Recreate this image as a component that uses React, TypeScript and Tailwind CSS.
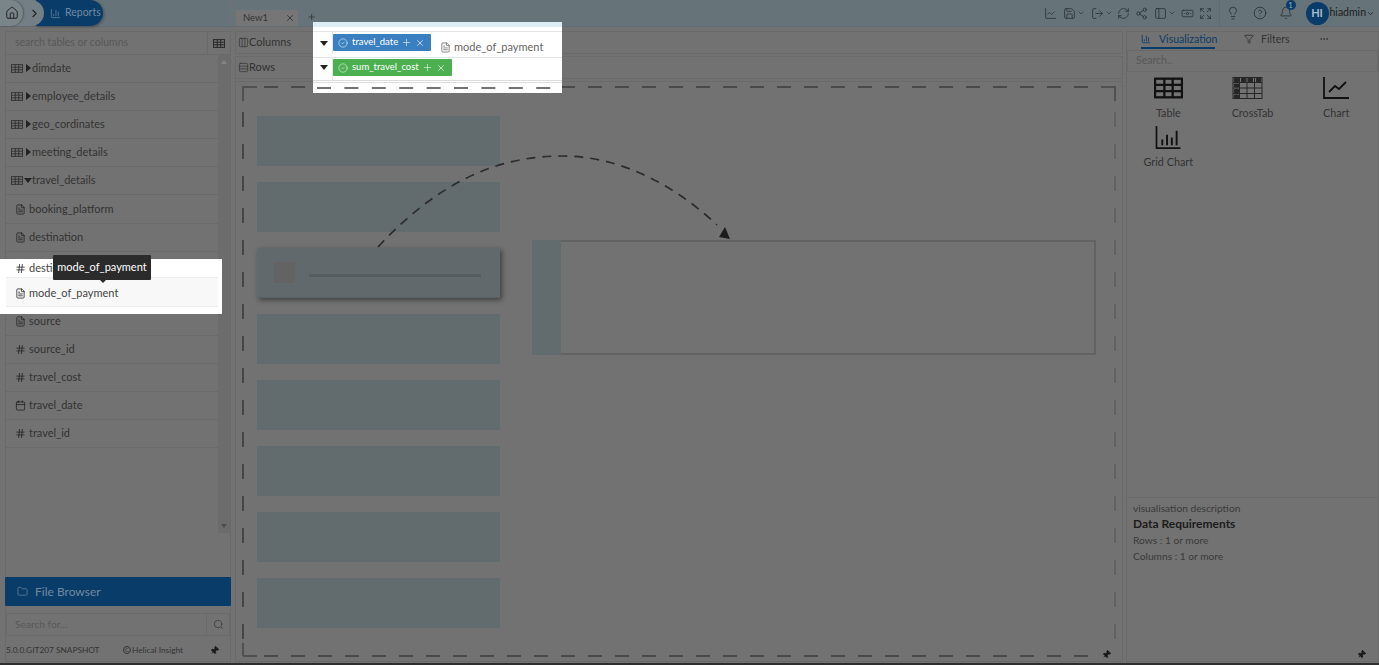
import React from 'react';
import {
  Bell,
  Calendar,
  ChartColumn,
  ChartLine,
  ChevronDown,
  ChevronRight,
  CircleCheck,
  CircleHelp,
  Columns3,
  Ellipsis,
  Expand,
  FileText,
  Filter,
  Folder,
  Hash,
  House,
  Lightbulb,
  Pin,
  RefreshCw,
  Rows3,
  Save,
  Search,
  Share2,
  Banknote,
  PanelLeft,
  LogOut,
  X,
  Plus,
} from 'lucide-react';

const tables = ['dimdate', 'employee_details', 'geo_cordinates', 'meeting_details'];

// the two rows under the white highlight are drawn in the highlight itself
const fields = [
  { name: 'booking_platform', icon: FileText },
  { name: 'destination', icon: FileText },
  { name: '', icon: Hash },
  { name: '', icon: FileText },
  { name: 'source', icon: FileText },
  { name: 'source_id', icon: Hash },
  { name: 'travel_cost', icon: Hash },
  { name: 'travel_date', icon: Calendar },
  { name: 'travel_id', icon: Hash },
];

const TableGlyph = ({ className }: { className: string }) => (
  <svg viewBox="0 0 28 20" className={className} fill="none" stroke="currentColor" strokeWidth="2.2">
    <rect x="1" y="1" width="26" height="18" />
    <path d="M1 7h26M1 13h26M10 1v18M18 1v18" />
  </svg>
);

const Caret = ({ open }: { open?: boolean }) => (
  <span className={`w-0 h-0 border-solid ${open ? 'border-x-[4px] border-t-[5px] border-x-transparent border-t-[#222]' : 'border-y-[4px] border-l-[5px] border-y-transparent border-l-[#222]'}`} />
);

const TreeRow = ({ name, open }: { name: string; open?: boolean }) => (
  <div className="h-[28px] flex items-center pl-[5px] pb-[1px] border-b border-[#6a6a6a] text-[#333]">
    <TableGlyph className="w-[12px] h-[9px] text-[#333]" />
    <span className="ml-[1px] w-[8px] flex justify-center"><Caret open={open} /></span>
    <span>{name}</span>
  </div>
);

const ToolIcon = ({ icon: Icon, chevron, className }: { icon: React.ElementType; chevron?: boolean; className: string }) => (
  <span className={`flex items-center ${className}`}>
    <Icon size={13} strokeWidth={1.5} className="text-[#2a3338]" />
    {chevron && <ChevronDown size={8} className="ml-[1px] text-[#2a3338]" />}
  </span>
);

const placeholders = [0, 1, 2, 3, 4, 5, 6, 7];

export default function App() {
  return (
    <div className="relative w-full h-[665px] overflow-hidden bg-[#727272] flex flex-col text-[11px] text-[#333] font-['Lato','Noto_Sans',sans-serif]">
      {/* top bar */}
      <header className="h-[27px] shrink-0 flex bg-[#667379] border-b border-[#606c72]">
        <div className="relative w-[231px] shrink-0 border-r border-[#727272]">
          <div className="absolute left-[36px] top-0 h-[26px] w-[67px] rounded-r-[14px] bg-[#0a3c6a] flex items-center pl-[14px] text-[#6f8aa0] shadow-[1px_1px_3px_rgba(0,0,0,.3)]">
            <ChartColumn size={11} strokeWidth={1.5} />
            <span className="ml-[4px] text-[10.5px]">Reports</span>
          </div>
          <div className="absolute left-0 top-0 h-[26px] w-[44px] rounded-r-[14px] bg-[#737f85] flex items-center justify-end pr-[3px]">
            <ChevronRight size={13} className="text-[#222]" />
          </div>
          <div className="absolute left-0 top-0 h-[26px] w-[23px] rounded-r-[14px] bg-[#7a858a] flex items-center justify-center shadow-[1px_0_2px_rgba(0,0,0,.3)]">
            <House size={14} strokeWidth={1.6} className="text-[#1c1c1c]" />
          </div>
        </div>
        <div className="ml-[5px] w-[80px] flex items-end">
          <div className="w-[66px] h-[16px] bg-[#767676] flex items-center pl-[7px] pr-[3px] justify-between text-[9.5px]">
            New1
            <X size={10} className="text-[#333]" />
          </div>
          <Plus size={10} strokeWidth={2} className="ml-[9px] mb-[4px] text-[#333]" />
        </div>
        <div className="ml-auto h-full flex items-center">
          <ToolIcon icon={ChartLine} className="w-[19px]" />
          <ToolIcon icon={Save} chevron className="w-[28px]" />
          <ToolIcon icon={LogOut} chevron className="w-[26px]" />
          <ToolIcon icon={RefreshCw} className="w-[18px]" />
          <ToolIcon icon={Share2} className="w-[19px]" />
          <ToolIcon icon={PanelLeft} chevron className="w-[27px]" />
          <ToolIcon icon={Banknote} className="w-[18px]" />
          <ToolIcon icon={Expand} className="w-[20px]" />
          <div className="w-px h-full bg-[#606c72] mr-[6px]" />
          <span className="w-[27px]"><Lightbulb size={14} strokeWidth={1.5} className="text-[#2a3338]" /></span>
          <span className="w-[26px]"><CircleHelp size={14} strokeWidth={1.5} className="text-[#2a3338]" /></span>
          <span className="relative w-[27px]">
            <Bell size={14} strokeWidth={1.5} className="text-[#2a3338]" />
            <span className="absolute -top-[6px] left-[7px] w-[10px] h-[10px] rounded-full bg-[#0a3c6a] text-[#9db8cc] text-[7px] leading-[10px] text-center">1</span>
          </span>
          <span className="w-[23px] h-[23px] rounded-full bg-[#0a3c6a] text-[#a8bccb] text-[11px] font-bold flex items-center justify-center">HI</span>
          <span className="ml-[1px] text-[10.5px] text-[#1c1c1c]">hiadmin</span>
          <ChevronDown size={9} className="mr-[4px] text-[#1c1c1c]" />
        </div>
      </header>

      <div className="flex-1 min-h-0 flex pl-[5px] pt-[4px] pb-[3px]">
        {/* left panel */}
        <aside className="w-[226px] shrink-0 flex flex-col border border-[#6a6a6a]">
          <div className="h-[23px] shrink-0 flex border-b border-[#6a6a6a]">
            <div className="flex-1 flex items-center pl-[9px] text-[#585858] text-[10.5px] border-r border-[#6a6a6a]">search tables or columns</div>
            <div className="w-[22px] flex items-center justify-center">
              <TableGlyph className="w-[12px] h-[9px] text-[#222]" />
            </div>
          </div>
          <div className="h-[516px] flex">
            <div className="flex-1 min-w-0">
              {tables.map((t) => <TreeRow key={t} name={t} />)}
              <TreeRow name="travel_details" open />
              <div className="pt-px">
                {fields.map((f, i) => (
                  <div key={i} className="h-[28px] flex items-center pl-[9px] border-b border-[#6a6a6a] text-[#333]">
                    <f.icon size={11} strokeWidth={1.7} className="text-[#222]" />
                    <span className="ml-[3px]">{f.name}</span>
                  </div>
                ))}
              </div>
            </div>
            <div className="w-[12px] h-[478px] bg-[#6c6c6c] flex flex-col items-center justify-between py-[5px]">
              <span className="border-x-[3px] border-b-[4px] border-x-transparent border-b-[#858585]" />
              <span className="border-x-[3px] border-t-[4px] border-x-transparent border-t-[#4c4c4c]" />
            </div>
          </div>
          <div className="mt-[6px] -mx-px h-[29px] shrink-0 bg-[#0a3c6a] rounded-[1px] flex items-center pl-[12px] text-[#6f8aa0] text-[12px]">
            <Folder size={11} strokeWidth={1.5} />
            <span className="ml-[7px]">File Browser</span>
          </div>
          <div className="mt-[7px] h-[23px] shrink-0 flex border border-[#6a6a6a]">
            <div className="flex-1 flex items-center pl-[8px] text-[#585858] text-[10.2px] border-r border-[#6a6a6a]">Search for...</div>
            <div className="w-[22px] flex items-center justify-center"><Search size={11} className="text-[#444]" /></div>
          </div>
          <div className="flex-1 flex items-center pt-[3px] text-[8.3px] text-[#333]">
            <span className="w-[117px] whitespace-nowrap">5.0.0.GIT207 SNAPSHOT</span>
            <span className="w-[8px] h-[8px] rounded-full border border-[#333] text-[6px] leading-[6px] text-center">C</span>
            <span className="ml-[1px] w-[78px] whitespace-nowrap">Helical Insight</span>
            <Pin size={9} fill="#1a1a1a" className="text-[#1a1a1a] rotate-45" />
          </div>
        </aside>

        {/* center */}
        <main className="w-[888px] shrink-0 ml-[4px] flex flex-col">
          <div className="h-[23px] shrink-0 flex items-center pl-[2px] pb-[1px] border border-[#6a6a6a] text-[#333]">
            <Columns3 size={11} strokeWidth={1.5} />
            <span>Columns</span>
          </div>
          <div className="mt-[2px] h-[23px] shrink-0 flex items-center pl-[2px] pb-[1px] border border-[#6a6a6a] text-[#333]">
            <Rows3 size={11} strokeWidth={1.5} />
            <span>Rows</span>
          </div>
          <div className="relative mt-[2px] flex-1 min-h-0 border border-[#6a6a6a]">
            <div className="pt-[34px] pl-[21px] flex items-start">
              <div className="w-[243px] flex flex-col gap-[16px]">
                {placeholders.map((i) =>
                  i === 2 ? (
                    <div key={i} className="h-[50px] bg-[#61696c] border-b border-[#596266] shadow-[2px_2px_5px_rgba(0,0,0,.45)] flex items-center pl-[17px]">
                      <div className="w-[21px] h-[21px] bg-[#636363]" />
                      <div className="ml-[14px] mt-[6px] w-[172px] h-[3px] bg-[#555d60]" />
                    </div>
                  ) : (
                    <div key={i} className="h-[50px] bg-[#626b6e]" />
                  ),
                )}
              </div>
              <div className="ml-[32px] mt-[124px] w-[564px] h-[115px] flex border-2 border-[#626262]">
                <div className="-ml-[2px] -my-[2px] w-[29px] bg-[#626b6e]" />
              </div>
            </div>
            <svg viewBox="236 82 886 579" className="absolute inset-0 w-full h-full" fill="none">
              <path d="M257 87H243V101" stroke="#505050" strokeWidth="2" />
              <path d="M1101 87H1115V101" stroke="#505050" strokeWidth="2" />
              <path d="M243 656H257" stroke="#505050" strokeWidth="2" />
              <path d="M243 643V656" stroke="#505050" strokeWidth="2" />
              <path d="M264 87H1095" stroke="#3c3c3c" strokeWidth="1.6" strokeDasharray="14 13" />
              <path d="M264 656H1095" stroke="#3c3c3c" strokeWidth="1.6" strokeDasharray="14 13" />
              <path d="M243 112V640" stroke="#3c3c3c" strokeWidth="1.6" strokeDasharray="15 17" />
              <path d="M1115 112V640" stroke="#585858" strokeWidth="1.2" strokeDasharray="15 17" />
              <path d="M378 247C440 180 500 156 562 156C625 156 680 190 717 225" stroke="#2c2c2c" strokeWidth="1.7" strokeDasharray="9 7" />
              <path d="M725 227L719 237L730 239Z" fill="#1c1c1c" />
            </svg>
            <Pin size={9} fill="#1a1a1a" className="absolute right-[11px] bottom-[2px] text-[#1a1a1a] rotate-45" />
          </div>
        </main>

        {/* right panel */}
        <section className="flex-1 min-w-0 ml-[3px] flex flex-col border border-[#6a6a6a]">
          <div className="h-[18px] shrink-0 flex items-start text-[10.5px] leading-[15px]">
            <div className="ml-[14px] w-[74px] h-[17px] flex border-b-2 border-[#0a3c6a] text-[#0a3c6a]">
              <ChartColumn size={10} className="mt-[2px] shrink-0" />
              <span className="ml-[8px] whitespace-nowrap">Visualization</span>
            </div>
            <Filter size={10} className="ml-[29px] mt-[2px] text-[#333]" />
            <span className="ml-[7px] text-[#333]">Filters</span>
            <Ellipsis size={10} className="ml-[29px] mt-[2px] text-[#333]" />
          </div>
          <div className="h-[22px] shrink-0 flex items-center pl-[8px] pb-[1px] border border-[#6a6a6a] text-[#585858] text-[10.5px]">Search..</div>
          <div className="grid grid-cols-3 content-start h-[425px] pt-[5px] text-[10.8px] text-[#333]">
            <div className="h-[49px] flex flex-col items-center -ml-[1px]">
              <TableGlyph className="w-[29px] h-[22px] text-[#111]" />
              <span className="mt-[6px]">Table</span>
            </div>
            <div className="h-[49px] flex flex-col items-center">
              <svg viewBox="0 0 30 22" className="w-[31px] h-[22px] -ml-[9px] text-[#262626]" fill="none" stroke="currentColor" strokeWidth="1">
                <rect x=".5" y=".5" width="29" height="21" />
                <path d="M.5 5.5h29M.5 11h29M.5 16.5h29M7 .5v21M14.5 .5v21M22 .5v21" />
                <path d="M2 1.5h4v3H2zM9 1.5h4v3H9zM16 1.5h4v3h-4zM24 1.5h4v3h-4zM2 7h4v3H2zM2 12.5h4v3H2zM2 18h4v3H2z" fill="currentColor" />
              </svg>
              <span className="mt-[6px]">CrossTab</span>
            </div>
            <div className="h-[49px] flex flex-col items-center">
              <svg viewBox="0 0 26 22" className="w-[26px] h-[22px] text-[#111]" fill="none" stroke="currentColor" strokeWidth="1.8">
                <path d="M1 0v21h25" />
                <path d="M6 15l6-6 4 3 7-7" />
              </svg>
              <span className="mt-[6px]">Chart</span>
            </div>
            <div className="h-[49px] flex flex-col items-center -ml-[1px]">
              <svg viewBox="0 0 26 24" className="w-[26px] h-[23px] text-[#111]" fill="none" stroke="currentColor" strokeWidth="1.8">
                <path d="M1 0v23h25" />
                <path d="M7 14v6M12 9v11M17 12v8M22 5v15" strokeWidth="2" />
              </svg>
              <span className="mt-[5px]">Grid Chart</span>
            </div>
          </div>
          <div className="relative flex-1 border-t border-[#6a6a6a] pl-[6px] pt-[4px] text-[10.2px] text-[#3a3a3a]">
            <p className="leading-[12px]">visualisation description</p>
            <p className="mt-[3px] leading-[14px] text-[12px] font-bold text-[#1c1c1c]">Data Requirements</p>
            <p className="mt-[3px] leading-[13px]">Rows : 1 or more</p>
            <p className="mt-[3px] leading-[13px]">Columns : 1 or more</p>
            <Pin size={9} fill="#1a1a1a" className="absolute right-[12px] bottom-[2px] text-[#1a1a1a] rotate-45" />
          </div>
        </section>
      </div>
      <div className="absolute left-0 right-0 bottom-0 h-[2px] bg-[#2e2e2e]" />

      {/* highlighted field in the tree */}
      <div className="absolute left-0 top-[259px] w-[222px] h-[55px] bg-white overflow-hidden">
        <div className="ml-[6px] mr-[4px] h-[19px] flex items-center pl-[9px] border-b border-[#eee] text-[#444]">
          <Hash size={11} strokeWidth={1.7} className="text-[#222]" />
          <span className="ml-[3px]">destination_id</span>
        </div>
        <div className="ml-[6px] mr-[4px] h-[29px] flex items-center pl-[9px] pt-[2px] bg-[#f8f8f8] border-b border-[#eee] text-[#444]">
          <FileText size={11} strokeWidth={1.7} className="text-[#222]" />
          <span className="ml-[3px]">mode_of_payment</span>
        </div>
      </div>
      <div className="absolute left-[53px] top-[255px] w-[98px] h-[25px] rounded-[1px] bg-[#2b2b2b] text-white flex items-center justify-center text-[11px]">
        mode_of_payment
        <span className="absolute left-[47px] -bottom-[3px] border-x-[3px] border-t-[3px] border-x-transparent border-t-[#2b2b2b]" />
      </div>

      {/* highlighted drop target in the shelves */}
      <div className="absolute left-[313px] top-[22px] w-[249px] h-[71px] bg-white overflow-hidden">
        <div className="h-[5px] bg-[#dcedf5]" />
        <div className="mt-[4px] h-[23px] flex items-start border-t border-[#e4e4e4]">
          <span className="ml-[6px] mt-[9px] w-[10px] flex justify-center"><Caret open /></span>
          <div className="ml-[3px] h-full w-px bg-[#e4e4e4]" />
          <div className="mt-[2px] w-[98px] h-[17px] rounded-[1px] bg-[#3a80c0] text-white flex items-center pl-[5px] text-[9.5px]">
            <CircleCheck size={10} strokeWidth={1.3} />
            <span className="ml-[4px]">travel_date</span>
            <Plus size={11} strokeWidth={1.2} className="ml-[3px]" />
            <X size={10} strokeWidth={1.5} className="ml-[3px]" />
          </div>
          <div className="ml-[9px] mt-[7px] flex items-center text-[#666] text-[11px]">
            <FileText size={11} strokeWidth={1.5} className="text-[#555]" />
            <span className="ml-[3px]">mode_of_payment</span>
          </div>
        </div>
        <div className="mt-[3px] h-[23px] flex items-start border-t border-[#e4e4e4]">
          <span className="ml-[6px] mt-[7px] w-[10px] flex justify-center"><Caret open /></span>
          <div className="ml-[3px] h-full w-px bg-[#e4e4e4]" />
          <div className="mt-[1px] w-[119px] h-[17px] rounded-[1px] bg-[#4caf50] text-white flex items-center pl-[5px] text-[9.5px]">
            <CircleCheck size={10} strokeWidth={1.3} />
            <span className="ml-[4px]">sum_travel_cost</span>
            <Plus size={11} strokeWidth={1.2} className="ml-[3px]" />
            <X size={10} strokeWidth={1.5} className="ml-[3px]" />
          </div>
        </div>
        <div className="border-t border-[#ddd] h-[3px] border-b" />
        <svg viewBox="0 0 249 6" className="w-[249px] h-[6px] mt-[2px]" fill="none">
          <path d="M4 3H240" stroke="#444" strokeWidth="1.6" strokeDasharray="14 13.4" />
        </svg>
      </div>
    </div>
  );
}
